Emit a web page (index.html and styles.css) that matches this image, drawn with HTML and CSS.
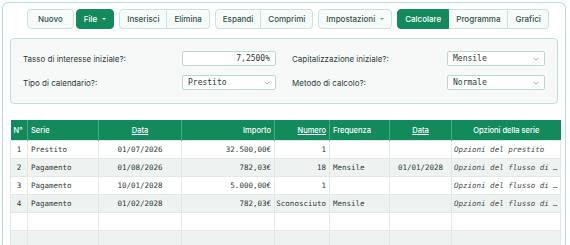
FILE: index.html
```html
<!DOCTYPE html>
<html lang="it">
<head>
    <meta charset="UTF-8">
    <meta name="viewport" content="width=device-width, initial-scale=1.0">
    <title>Calcolatore prestito</title>
    <link rel="stylesheet" href="styles.css">
</head>
<body>
    <div class="app">
        <!-- Barra degli strumenti -->
        <div class="toolbar">
            <div class="group">
                <button class="btn btn-wide">Nuovo</button>
            </div>
            <div class="group">
                <button class="btn btn-green">File <span class="caret"></span></button>
            </div>
            <div class="group gap">
                <button class="btn">Inserisci</button>
                <button class="btn">Elimina</button>
            </div>
            <div class="group gap">
                <button class="btn">Espandi</button>
                <button class="btn">Comprimi</button>
            </div>
            <div class="group gap">
                <button class="btn">Impostazioni <span class="caret caret-grey"></span></button>
            </div>
            <div class="group gap">
                <button class="btn btn-green">Calcolare</button>
                <button class="btn">Programma</button>
                <button class="btn">Grafici</button>
            </div>
        </div>

        <!-- Impostazioni del calcolo -->
        <div class="settings">
            <div class="field">
                <label>Tasso di interesse iniziale?:</label>
                <div class="control input">7,2500%</div>
            </div>
            <div class="field">
                <label>Capitalizzazione iniziale?:</label>
                <div class="control select wide">Mensile <svg class="chev" viewBox="0 0 8 5"><path d="M1 1l3 3 3-3"/></svg></div>
            </div>
            <div class="field">
                <label>Tipo di calendario?:</label>
                <div class="control select">Prestito <svg class="chev" viewBox="0 0 8 5"><path d="M1 1l3 3 3-3"/></svg></div>
            </div>
            <div class="field">
                <label>Metodo di calcolo?:</label>
                <div class="control select wide">Normale <svg class="chev" viewBox="0 0 8 5"><path d="M1 1l3 3 3-3"/></svg></div>
            </div>
        </div>

        <!-- Serie di flussi -->
        <table class="grid">
            <colgroup>
                <col style="width:17px">
                <col style="width:71px">
                <col style="width:83px">
                <col style="width:93px">
                <col style="width:55px">
                <col style="width:60px">
                <col style="width:62px">
                <col style="width:109px">
            </colgroup>
            <thead>
                <tr>
                    <th class="l">N°</th>
                    <th class="l">Serie</th>
                    <th class="c"><u>Data</u></th>
                    <th class="r">Importo</th>
                    <th class="r"><u>Numero</u></th>
                    <th class="l">Frequenza</th>
                    <th class="c"><u>Data</u></th>
                    <th class="c">Opzioni della serie</th>
                </tr>
            </thead>
            <tbody>
                <tr>
                    <td class="c">1</td><td>Prestito</td><td class="c">01/07/2026</td><td class="r">32.500,00€</td>
                    <td class="r">1</td><td></td><td></td><td class="opt">Opzioni del prestito</td>
                </tr>
                <tr>
                    <td class="c">2</td><td>Pagamento</td><td class="c">01/08/2026</td><td class="r">782,03€</td>
                    <td class="r">18</td><td>Mensile</td><td class="c">01/01/2028</td><td class="opt">Opzioni del flusso di …</td>
                </tr>
                <tr>
                    <td class="c">3</td><td>Pagamento</td><td class="c">10/01/2028</td><td class="r">5.000,00€</td>
                    <td class="r">1</td><td></td><td></td><td class="opt">Opzioni del flusso di …</td>
                </tr>
                <tr>
                    <td class="c">4</td><td>Pagamento</td><td class="c">01/02/2028</td><td class="r">782,03€</td>
                    <td class="r spill">Sconosciuto</td><td>Mensile</td><td></td><td class="opt">Opzioni del flusso di …</td>
                </tr>
                <tr><td></td><td></td><td></td><td></td><td></td><td></td><td></td><td></td></tr>
                <tr><td></td><td></td><td></td><td></td><td></td><td></td><td></td><td></td></tr>
            </tbody>
        </table>
    </div>
</body>
</html>
```

FILE: styles.css
```css
body {
    margin: 0;
    background: #ffffff;
    font-family: 'Inter', 'Noto Sans', sans-serif;
    color: #2b3a36;
    overflow: hidden;
}

.app {
    margin: 2px 4px 0 2px;
    border: 1px solid #b7dfd1;
    border-bottom: none;
    border-radius: 6px 6px 0 0;
    padding: 6px 7px 0 7px;
    height: 260px;
}

/* toolbar */
.toolbar {
    display: flex;
    padding-left: 17px;
    height: 20px;
}

.group {
    display: flex;
    margin-right: 2px;
}

.group.gap {
    margin-left: 3px;
}

.btn {
    font-family: 'Inter', sans-serif;
    font-size: 8px;
    font-weight: 500;
    color: #33514a;
    background: #f6faf9;
    border: 1px solid #c9e2da;
    border-radius: 4px;
    padding: 0 7px;
    height: 20px;
    display: flex;
    align-items: center;
    gap: 5px;
    cursor: pointer;
}

.btn-wide {
    padding: 0 10px;
}

.group .btn + .btn {
    border-left: none;
}

.group .btn:not(:last-child) {
    border-top-right-radius: 0;
    border-bottom-right-radius: 0;
}

.group .btn:not(:first-child) {
    border-top-left-radius: 0;
    border-bottom-left-radius: 0;
}

.btn-green {
    background: #138a5c;
    border-color: #138a5c;
    color: #ffffff;
}

.caret {
    width: 0;
    height: 0;
    border-left: 2px solid transparent;
    border-right: 2px solid transparent;
    border-top: 2px solid #ffffff;
}

.caret-grey {
    border-top-color: #7d8b88;
}

/* settings */
.settings {
    margin-top: 9px;
    background: #f7f9f9;
    border: 1px solid #bfe0d4;
    border-radius: 4px;
    padding: 12px 12px 13px 12px;
    display: grid;
    grid-template-columns: 1fr 1fr;
    column-gap: 16px;
    row-gap: 9px;
}

.field {
    display: flex;
    justify-content: space-between;
    align-items: center;
    height: 15px;
}

.field label {
    font-size: 8px;
    color: #2b3a36;
}

.control {
    box-sizing: border-box;
    height: 15px;
    width: 94px;
    background: #ffffff;
    border: 1px solid #bcd9cf;
    border-radius: 2px;
    font-family: 'DejaVu Sans Mono', monospace;
    font-size: 8px;
    color: #2b3a36;
    display: flex;
    align-items: center;
    padding: 0 5px;
}

.control.wide {
    width: 98px;
}

.input {
    justify-content: flex-end;
}

.select {
    justify-content: space-between;
}

.chev {
    width: 6px;
    height: 4px;
    fill: none;
    stroke: #8a9693;
    stroke-width: 1;
}

/* table */
.grid {
    margin-top: 16px;
    width: 550px;
    border-collapse: collapse;
    table-layout: fixed;
}

.grid th {
    background: #138a5c;
    color: #ffffff;
    font-size: 7.5px;
    font-weight: 500;
    height: 20px;
    padding: 0 3px;
    border-left: 1px solid #4aa882;
    white-space: nowrap;
}

.grid th:first-child {
    border-left: none;
}

.grid td {
    height: 17px;
    padding: 0 3px;
    font-family: 'DejaVu Sans Mono', monospace;
    font-size: 7.5px;
    color: #2b3a36;
    border: 1px solid #e1e9e6;
    white-space: nowrap;
    overflow: hidden;
}

.grid tbody tr:nth-child(even) td {
    background: #eef3f1;
}

.l { text-align: left; }
.c { text-align: center; }
.r { text-align: right; }

.grid td.spill {
    overflow: visible;
    direction: rtl;
}

.grid td.opt {
    font-style: italic;
    color: #3f4b48;
    padding: 0 1px 0 2px;
}
```
